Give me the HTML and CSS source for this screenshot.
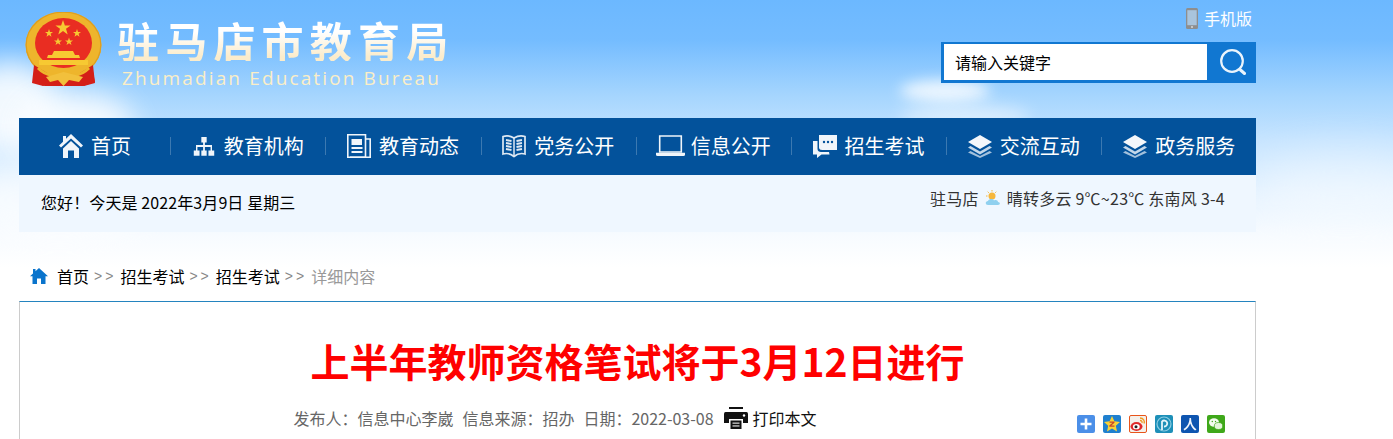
FILE: index.html
```html
<!DOCTYPE html>
<html lang="zh-CN">
<head>
<meta charset="utf-8">
<title>上半年教师资格笔试将于3月12日进行</title>
<link rel="stylesheet" href="styles.css">
</head>
<body>
<div class="sky" aria-hidden="true">
  <span class="cloud c1"></span><span class="cloud c2"></span><span class="cloud c3"></span><span class="cloud c4"></span><span class="cloud c5"></span><span class="cloud c6"></span>
</div>
<div class="page">
  <header class="masthead">
    <div class="brand">
      <svg class="emblem" viewBox="0 0 78 76">
        <path d="M12 50 L8 70 L20 74 L58 74 L70 70 L66 50Z" fill="#d41f18"/>
        <ellipse cx="38.5" cy="33" rx="38" ry="33.5" fill="#eeb52c"/>
        <ellipse cx="38.5" cy="33" rx="37.3" ry="32.8" fill="none" stroke="#dd9d20" stroke-width="1.2"/>
        <path d="M9 53 L7 71 L18 74 L30 70 H47 L59 74 L70 71 L68 53 L50 64 H27Z" fill="#d41f18"/>
        <ellipse cx="38.5" cy="31" rx="28.5" ry="25" fill="#e92d22"/>
        <g fill="#f7c932">
          <polygon points="38,8 39.9,13.4 45.6,13.4 41,16.8 42.7,22.4 38,19 33.3,22.4 35,16.8 30.4,13.4 36.1,13.4"/>
          <polygon points="24,17 25,20 28,20 25.6,21.8 26.5,24.7 24,23 21.5,24.7 22.4,21.8 20,20 23,20"/>
          <polygon points="52,17 53,20 56,20 53.6,21.8 54.5,24.7 52,23 49.5,24.7 50.4,21.8 48,20 51,20"/>
          <polygon points="33,25.5 34,28.4 37,28.4 34.6,30.2 35.5,33 33,31.3 30.5,33 31.4,30.2 29,28.4 32,28.4"/>
          <polygon points="44,25.5 45,28.4 48,28.4 45.6,30.2 46.5,33 44,31.3 41.5,33 42.4,30.2 40,28.4 43,28.4"/>
          <path d="M29 39 H48 L50 43 H54 L55 46 H22 L23 43 H27Z"/>
          <rect x="14" y="48" width="49" height="5"/>
        </g>
        <path d="M13 56 C22 65 32 65 38.500 60 C45 65 55 65 64 56" fill="none" stroke="#eeb52c" stroke-width="3"/>
        <path d="M21 65 L38.500 60 L58 65 L54 70 L44 68 L38.500 74 L33 68 L25 70Z" fill="#f2c03c"/>
      </svg>
      <div class="brand-text">
        <div class="brand-cn">驻马店市教育局</div>
        <div class="brand-en">Zhumadian Education Bureau</div>
      </div>
    </div>
    <div class="tools">
      <a class="mobile">
        <svg class="phone" viewBox="0 0 12 21"><rect width="12" height="21" rx="1.500" fill="#8e8e8e"/><rect x="1.300" y="2.200" width="9.400" height="15" fill="#a9c4dc"/><circle cx="6" cy="19" r="1" fill="#d8d8d8"/></svg>
        <span>手机版</span>
      </a>
      <form class="search">
        <div class="search-input">请输入关键字</div>
        <div class="search-btn">
          <svg viewBox="0 0 26 26"><circle cx="12" cy="12" r="10.800" fill="none" stroke="#eaf4fc" stroke-width="2.200"/><path d="M20.500 21 L24.500 24.500" stroke="#eaf4fc" stroke-width="3" stroke-linecap="round"/></svg>
        </div>
      </form>
    </div>
  </header>

  <nav class="nav">
    <a class="nav-item first">
      <svg class="ico" viewBox="0 0 24 24"><path d="M12 0 L24 11.500 L22 13.500 L12 4.500 L2 13.500 L0 11.500 L4 7.700 V2 H7 V4.800Z M4 14.500 L12 7 L20 14.500 V24 H15 V16.500 H9 V24 H4Z" fill="#f0f5fa"/></svg>
      <span>首页</span>
    </a>
    <a class="nav-item">
      <svg class="ico" viewBox="-1.500 0 27 24"><path d="M9 2 H15 V8 H13 V11 H21 V17 H23.500 V23 H17 V17 H19.400 V13 H13 V17 H15 V23 H9 V17 H11 V13 H4.600 V17 H7 V23 H.5 V17 H3 V11 H11 V8 H9Z" fill="#f0f5fa"/></svg>
      <span>教育机构</span>
    </a>
    <a class="nav-item">
      <svg class="ico" viewBox="0 0 24 24"><path d="M.8 .8 H18.500 V23.200 H.8Z" fill="none" stroke="#f0f5fa" stroke-width="1.600"/><path d="M19 5 H23.200 V23.200 H3" fill="none" stroke="#f0f5fa" stroke-width="1.600"/><path d="M4.500 5 H15 V11 H4.500Z M4.500 13 H15.500 V15 H4.500Z M4.500 17 H15.500 V19 H4.500Z" fill="#f0f5fa"/></svg>
      <span>教育动态</span>
    </a>
    <a class="nav-item">
      <svg class="ico" viewBox="0 0 24 24"><path d="M12 4 C8.500 1.800 4 1.500 1 2.500 V20 C4.500 19 8.500 19.500 12 22.500 C15.500 19.500 19.500 19 23 20 V2.500 C20 1.500 15.500 1.800 12 4Z" fill="none" stroke="#dfe9f3" stroke-width="1.700"/><path d="M12 4 V22" stroke="#dfe9f3" stroke-width="1.500"/><path d="M4 6 L9.500 7 M4 9 L9.500 10 M4 12 L9.500 13 M4 15 L9.500 16 M20 6 L14.500 7 M20 9 L14.500 10 M20 12 L14.500 13 M20 15 L14.500 16" stroke="#dfe9f3" stroke-width="1.800"/></svg>
      <span>党务公开</span>
    </a>
    <a class="nav-item wide-ico">
      <svg class="ico laptop" viewBox="0 0 29 22"><path d="M3.700 1 H25.300 V17 H3.700Z" fill="none" stroke="#f0f5fa" stroke-width="1.600"/><path d="M0 17.800 H29 V19.500 Q29 21 27.500 21 H1.500 Q0 21 0 19.500Z" fill="#f0f5fa"/></svg>
      <span>信息公开</span>
    </a>
    <a class="nav-item">
      <svg class="ico" viewBox="0 0 24 24"><path d="M6 1 H24 V16 H11 C8 16 6 16 6 13Z" fill="#f0f5fa"/><path d="M4.500 7 V15 C4.500 17 6 18 8 18 H16 L16.500 20.500 H8.500 L4 24 V20.500 H0 V7Z" fill="#f0f5fa"/><circle cx="11" cy="8" r="1.200" fill="#03529b"/><circle cx="15" cy="8" r="1.200" fill="#03529b"/><circle cx="19" cy="8" r="1.200" fill="#03529b"/></svg>
      <span>招生考试</span>
    </a>
    <a class="nav-item">
      <svg class="ico" viewBox="0 0 24 24"><path d="M12 1 L24 8 L12 15 L0 8Z" fill="#f4f7fb"/><path d="M2.500 12 L0 13.500 L12 20.500 L24 13.500 L21.500 12 L12 17.500Z" fill="#c3d7ea"/><path d="M2.500 17 L0 18.500 L12 24 L24 18.500 L21.500 17 L12 22Z" fill="#a2c0dc"/></svg>
      <span>交流互动</span>
    </a>
    <a class="nav-item last">
      <svg class="ico" viewBox="0 0 24 24"><path d="M12 1 L24 8 L12 15 L0 8Z" fill="#f4f7fb"/><path d="M2.500 12 L0 13.500 L12 20.500 L24 13.500 L21.500 12 L12 17.500Z" fill="#c3d7ea"/><path d="M2.500 17 L0 18.500 L12 24 L24 18.500 L21.500 17 L12 22Z" fill="#a2c0dc"/></svg>
      <span>政务服务</span>
    </a>
  </nav>

  <div class="infobar">
    <div class="greeting">您好！今天是 2022年3月9日 星期三</div>
    <div class="weather">
      <span>驻马店</span>
      <svg class="wx" viewBox="0 0 16 16"><circle cx="7" cy="6" r="3.500" fill="#f6b73c"/><path d="M7 0 V1.500 M1 6 H2.500 M2.700 1.700 L3.800 2.800 M11.300 1.700 L10.200 2.800" stroke="#f6b73c"/><path d="M3 15 C0 15 0 11 3 11 C4 8.500 8 8.500 9 10.500 C11 9.500 13 10.500 13 12 C15.500 12 15.500 15 13 15Z" fill="#8fd0ef"/></svg>
      <span>晴转多云 9℃~23℃ 东南风 3-4</span>
    </div>
  </div>

  <div class="crumbs">
    <svg class="crumb-home" viewBox="0 0 18 16"><path d="M9 0 L18 8.300 H15.500 V16 H11 V10.500 H7 V16 H2.500 V8.300 H0 L3 5.500 V1 H5.500 V3.200Z" fill="#0a74cc"/></svg>
    <a>首页</a><i>&gt;&gt;</i><a>招生考试</a><i>&gt;&gt;</i><a>招生考试</a><i>&gt;&gt;</i><em>详细内容</em>
  </div>

  <main class="article">
    <h1>上半年教师资格笔试将于3月12日进行</h1>
    <div class="meta">
      <div class="meta-main">
        <span>发布人：信息中心李崴</span>
        <span>信息来源：招办</span>
        <span>日期：2022-03-08</span>
        <a class="print">
          <svg viewBox="0 0 24 22"><path d="M5 0 H19 V2 H5Z M1.500 5 H22.500 Q24 5 24 7 V16 H19 V12 H5 V16 H0 V7 Q0 5 1.500 5Z" fill="#111"/><path d="M6.500 13.500 H17.500 V22 H6.500Z" fill="#111"/><rect x="8.500" y="15.500" width="7" height="1.300" fill="#ccc"/><rect x="8.500" y="18.300" width="7" height="1.300" fill="#ccc"/><circle cx="20" cy="8.500" r="1.200" fill="#fff"/></svg>
          <span>打印本文</span>
        </a>
      </div>
      <div class="share">
        <svg viewBox="0 0 18 18"><rect width="18" height="18" rx="2" fill="#4b8fe8"/><path d="M7.700 3.500 H10.300 V7.700 H14.500 V10.300 H10.300 V14.500 H7.700 V10.300 H3.500 V7.700 H7.700Z" fill="#fff"/></svg>
        <svg viewBox="0 0 18 18"><rect width="18" height="18" rx="2" fill="#1f80cf"/><polygon points="9,1 11.400,6.300 17,6.900 12.800,10.700 14,16.500 9,13.500 4,16.500 5.200,10.700 1,6.900 6.600,6.300" fill="#f8d237"/><path d="M6.500 6.500 H11.500 V7.700 L8.300 10.500 H11.500 V11.800 H6.300 V10.600 L9.500 7.800 H6.500Z" fill="#c9442a"/></svg>
        <svg viewBox="0 0 18 18"><rect x=".5" y=".5" width="17" height="17" rx="1.500" fill="#f4f0ea" stroke="#e8541a"/><ellipse cx="7.500" cy="11.500" rx="6" ry="4.400" fill="#e02a2a"/><ellipse cx="7.300" cy="11.700" rx="3.400" ry="2.600" fill="#fff"/><circle cx="7" cy="11.800" r="1.500" fill="#222"/><path d="M11 3 C14.500 3 16 6 15 8.500 M11 5.500 C12.600 5.500 13.300 6.500 13 8" fill="none" stroke="#f29a1f" stroke-width="1.300"/></svg>
        <svg viewBox="0 0 18 18"><rect width="18" height="18" rx="2" fill="#1d8fb8"/><circle cx="9" cy="9" r="7" fill="none" stroke="#8ccde2" stroke-width="1.200"/><path d="M7 15 V6.500 A3 3 0 1 1 9 11.500" fill="none" stroke="#e4f4fa" stroke-width="1.800"/></svg>
        <svg viewBox="0 0 18 18"><rect width="18" height="18" rx="2" fill="#0e55b0"/><path d="M8.500 3 H10 C10 8 12 12 15.500 14.500 L14 15.500 C11.500 13.500 10 11 9.200 8.500 C8.400 11 6.500 13.500 3.500 15.500 L2.500 14 C6 12 8.500 8 8.500 3Z" fill="#f0f5fc"/></svg>
        <svg viewBox="0 0 18 18"><rect width="18" height="18" rx="2" fill="#3fa81a"/><ellipse cx="7" cy="7.500" rx="5" ry="4.200" fill="#f4fbf0"/><ellipse cx="11.500" cy="11" rx="4.200" ry="3.500" fill="#e4f5da" stroke="#3fa81a" stroke-width=".7"/><circle cx="5.300" cy="6.500" r=".7" fill="#3fa81a"/><circle cx="8.500" cy="6.500" r=".7" fill="#3fa81a"/></svg>
      </div>
    </div>
  </main>
</div>
</body>
</html>
```
FILE: styles.css
```css
* { box-sizing: border-box; }
html, body { margin: 0; }
html { overflow: hidden; height: 439px; }
body {
  height: 439px;
  overflow: hidden;
  position: relative;
  background: #fff;
  font-family: "Noto Sans CJK SC", "Liberation Sans", sans-serif;
  font-size: 16px;
  color: #000;
}
.sky {
  position: absolute;
  left: 0; top: 0; right: 0;
  height: 270px;
  overflow: hidden;
  background: linear-gradient(180deg, #6cb8ff 0, #74bcff 40px, #a5d5fe 95px, #c6e4ff 140px, #e6f3ff 195px, #f7fbff 235px, #fff 268px);
}
.cloud { position: absolute; border-radius: 50%; background: #fff; filter: blur(14px); }
.c1 { left: -40px; top: 62px; width: 100px; height: 90px; opacity: .85; }
.c2 { left: 20px; top: 92px; width: 115px; height: 70px; opacity: .85; }
.c3 { left: -40px; top: 160px; width: 200px; height: 80px; opacity: .6; }
.c4 { left: 900px; top: 80px; width: 90px; height: 22px; opacity: .8; filter: blur(7px); }
.c5 { left: 900px; top: 105px; width: 130px; height: 24px; opacity: .5; filter: blur(8px); }
.c6 { left: 1255px; top: 150px; width: 180px; height: 70px; opacity: .35; filter: blur(20px); }

.page { position: relative; width: 1237px; height: 439px; margin-left: 19px; overflow: hidden; }

.masthead { height: 118px; display: flex; justify-content: space-between; }
.brand { display: flex; align-items: flex-start; padding: 12px 0 0 6px; }
.emblem { width: 78px; height: 76px; filter: blur(.4px); flex: none; }
.brand-text { margin-left: 14px; }
.brand-cn {
  font-size: 42px;
  line-height: 42px;
  margin-top: 7px;
  font-weight: 700;
  letter-spacing: 6.2px;
  white-space: nowrap;
  background: linear-gradient(180deg, #fff 30%, #fbeccb 90%);
  -webkit-background-clip: text;
  background-clip: text;
  color: transparent;
}
.brand-en {
  font-family: "Open Sans", "Liberation Sans", sans-serif;
  font-size: 19px;
  line-height: 24px;
  letter-spacing: 2.13px;
  margin: 5px 0 0 5px;
  color: #fbeec6;
  white-space: nowrap;
}

.tools { width: 315px; display: flex; flex-direction: column; align-items: flex-end; padding-top: 8px; }
.mobile { display: flex; align-items: center; gap: 6px; color: #fff; height: 21px; margin-right: 4px; line-height: 21px; }
.phone { width: 12px; height: 21px; }
.search { margin-top: 13px; width: 315px; height: 41px; display: flex; background: #1177d1; padding: 2px 0 3px 3px; }
.search-input { flex: 1; background: #fff; padding-left: 11px; line-height: 36px; color: #000; }
.search-btn { width: 49px; display: flex; align-items: center; justify-content: center; padding-left: 2px; }
.search-btn svg { width: 26px; height: 26px; }

.nav { height: 57px; background: #03529b; display: flex; color: #fff; font-size: 20px; line-height: 26px; }
.nav-item { position: relative; flex: 0 0 155.2px; height: 100%; padding: 0 2px 2px 0; display: flex; align-items: center; justify-content: center; gap: 8px; }
.nav-item.first { flex: 0 0 152.2px; padding-right: 0; }
.nav-item.last { flex: 1 1 0; padding-right: 0; }
.nav-item.wide-ico { gap: 6px; }
.nav-item:not(.last)::after { content: ""; position: absolute; right: 0; top: 19px; height: 18px; width: 1px; background: #3c79b1; }
.ico { width: 24px; height: 24px; flex: none; }
.laptop { width: 29px; height: 22px; }

.infobar { height: 57px; background: #eff7ff; display: flex; justify-content: space-between; padding: 0 31px 0 22px; }
.greeting { line-height: 55px; letter-spacing: .1px; }
.weather { display: flex; align-items: center; height: 46px; gap: 6px; color: #333; letter-spacing: .25px; }
.wx { width: 16px; height: 16px; }

.crumbs { height: 69px; display: flex; align-items: center; padding: 18px 0 0 11px; color: #000; line-height: 24px; }
.crumb-home { width: 18px; height: 16px; margin-right: 9px; }
.crumbs a { color: #000; }
.crumbs i { font-style: normal; color: #888; font-family: "Liberation Sans", sans-serif; font-size: 14px; letter-spacing: 3px; margin: 0 4px 0 5px; }
.crumbs em { font-style: normal; color: #999; }

.article { height: 138px; background: #fff; border: 1px solid #ccc; border-top-color: #2484bf; border-bottom: 0; }
.article h1 { margin: 0; padding-top: 30px; text-align: center; font-size: 39px; line-height: 56px; font-weight: 700; color: #f00; }
.meta { position: relative; display: flex; justify-content: center; margin-top: 17px; color: #666; }
.meta-main { display: flex; align-items: center; gap: 9px; height: 26px; padding-right: 165px; }
.print { display: flex; align-items: center; gap: 5px; color: #111; margin-left: 1px; }
.print svg { width: 24px; height: 22px; }
.share { position: absolute; right: 30px; top: 10px; display: flex; gap: 8px; }
.share svg { width: 18px; height: 18px; }
```
